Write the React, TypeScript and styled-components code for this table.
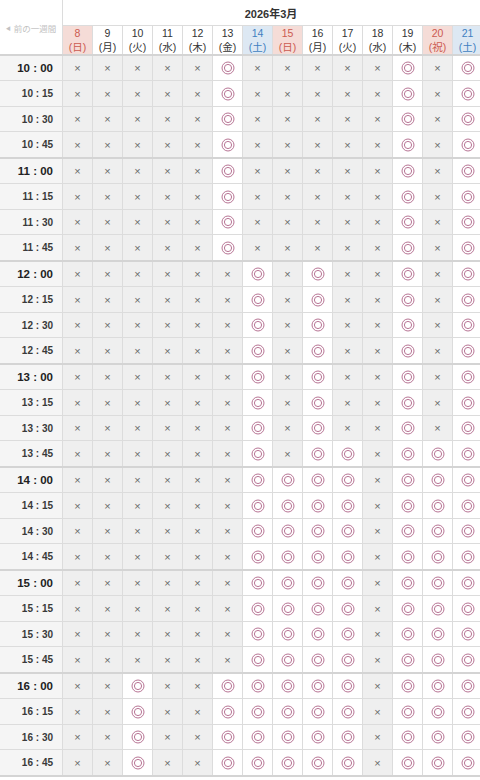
import React from "react";
import styled, { createGlobalStyle, css } from "styled-components";

type DayKind = "weekday" | "sat" | "sun";

type Day = { date: number; label: string; kind: DayKind };

const days: Day[] = [
  { date: 8, label: "日", kind: "sun" },
  { date: 9, label: "月", kind: "weekday" },
  { date: 10, label: "火", kind: "weekday" },
  { date: 11, label: "水", kind: "weekday" },
  { date: 12, label: "木", kind: "weekday" },
  { date: 13, label: "金", kind: "weekday" },
  { date: 14, label: "土", kind: "sat" },
  { date: 15, label: "日", kind: "sun" },
  { date: 16, label: "月", kind: "weekday" },
  { date: 17, label: "火", kind: "weekday" },
  { date: 18, label: "水", kind: "weekday" },
  { date: 19, label: "木", kind: "weekday" },
  { date: 20, label: "祝", kind: "sun" },
  { date: 21, label: "土", kind: "sat" },
];

// o = 空きあり, x = 満
const patterns: Record<string, string> = {
  morning: "xxxxxoxxxxxoxo",
  noon: "xxxxxxoxoxxoxo",
  late13: "xxxxxxoxooxooo",
  afternoon: "xxxxxxooooxooo",
  evening: "xxoxxoooooxooo",
};

const rowPattern = (hour: number, min: number) => {
  if (hour < 12) return patterns.morning;
  if (hour === 13 && min === 45) return patterns.late13;
  if (hour < 14) return patterns.noon;
  if (hour < 16) return patterns.afternoon;
  return patterns.evening;
};

const slots: { hour: number; min: number }[] = [];
for (let h = 10; h <= 16; h++) {
  for (const m of [0, 15, 30, 45]) slots.push({ hour: h, min: m });
}

const GlobalStyle = createGlobalStyle`
  body {
    margin: 0;
    background: #ffffff;
    overflow: hidden;
    font-family: "Liberation Sans", "Noto Sans CJK JP", sans-serif;
    color: #333;
  }
`;

const Calendar = styled.div`
  width: 482px;
`;

const Head = styled.div`
  display: grid;
  grid-template-columns: 62px 1fr;
  height: 56px;
`;

const PrevWeek = styled.div`
  display: flex;
  align-items: center;
  justify-content: center;
  border-bottom: 2px solid #d4d4d4;
  font-size: 8.5px;
  color: #c2c2c2;
  font-family: "Noto Sans CJK JP", sans-serif;
  padding-top: 1px;

  > span {
    font-size: 5px;
    margin-right: 3px;
  }
`;

const HeadRight = styled.div`
  display: flex;
  flex-direction: column;
`;

const MonthTitle = styled.div`
  height: 26px;
  box-sizing: border-box;
  border-bottom: 1px solid #dcdcdc;
  border-left: 1px solid #dcdcdc;
  display: flex;
  align-items: center;
  justify-content: center;
  font-size: 11px;
  font-weight: bold;
  color: #333;
  padding-right: 3px;
`;

const DayRow = styled.div`
  display: grid;
  grid-template-columns: repeat(14, 30px);
  height: 30px;
  box-sizing: border-box;
  border-bottom: 2px solid #d4d4d4;
`;

const dayColors: Record<DayKind, { bg: string; fg: string }> = {
  weekday: { bg: "#ffffff", fg: "#333333" },
  sat: { bg: "#dde8f3", fg: "#3f7fc1" },
  sun: { bg: "#f5dcd7", fg: "#cc5a50" },
};

const DayCell = styled.div<{ $kind: DayKind }>`
  border-left: 1px solid #dcdcdc;
  display: flex;
  flex-direction: column;
  align-items: center;
  justify-content: center;
  font-size: 10.5px;
  line-height: 14px;
  background: ${({ $kind }) => dayColors[$kind].bg};
  color: ${({ $kind }) => dayColors[$kind].fg};
`;

const heights = [25, 26, 25, 27];

const Row = styled.div<{ $index: number }>`
  display: grid;
  grid-template-columns: 62px repeat(14, 30px);
  box-sizing: border-box;
  height: ${({ $index }) => heights[$index % 4]}px;
  border-bottom: ${({ $index }) =>
    $index % 4 === 3 ? "2px solid #d4d4d4" : "1px solid #dcdcdc"};
`;

const TimeCell = styled.div<{ $hour: boolean }>`
  background: #f5f5f5;
  display: flex;
  align-items: center;
  justify-content: flex-end;
  padding-right: 9px;
  color: #222;
  ${({ $hour }) =>
    $hour
      ? css`
          font-size: 11.5px;
          font-weight: bold;
        `
      : css`
          font-size: 10px;
          font-weight: bold;
          color: #3a3a3a;
        `}
`;

const SlotCell = styled.div<{ $open: boolean }>`
  border-left: 1px solid #dcdcdc;
  display: flex;
  align-items: center;
  justify-content: center;
  background: ${({ $open }) => ($open ? "#ffffff" : "#efefef")};
  color: #6a6a6a;
  font-size: 11px;
`;

const DoubleCircle = () => (
  <svg width="14" height="14" viewBox="0 0 14 14">
    <circle cx="7" cy="7" r="6" fill="none" stroke="#b87595" strokeWidth="1" />
    <circle cx="7" cy="7" r="3.6" fill="none" stroke="#b87595" strokeWidth="1" />
  </svg>
);

const pad = (n: number) => (n < 10 ? `0${n}` : `${n}`);

export default function App() {
  return (
    <>
      <GlobalStyle />
      <Calendar>
        <Head>
          <PrevWeek>
            <span>◀</span>前の一週間
          </PrevWeek>
          <HeadRight>
            <MonthTitle>2026年3月</MonthTitle>
            <DayRow>
              {days.map((d) => (
                <DayCell key={d.date} $kind={d.kind}>
                  <span>{d.date}</span>
                  <span>({d.label})</span>
                </DayCell>
              ))}
            </DayRow>
          </HeadRight>
        </Head>
        {slots.map((s, i) => {
          const pattern = rowPattern(s.hour, s.min);
          return (
            <Row key={`${s.hour}-${s.min}`} $index={i}>
              <TimeCell $hour={s.min === 0}>
                {s.hour}&nbsp;:&nbsp;{pad(s.min)}
              </TimeCell>
              {pattern.split("").map((c, j) => (
                <SlotCell key={j} $open={c === "o"}>
                  {c === "o" ? <DoubleCircle /> : "×"}
                </SlotCell>
              ))}
            </Row>
          );
        })}
      </Calendar>
    </>
  );
}
